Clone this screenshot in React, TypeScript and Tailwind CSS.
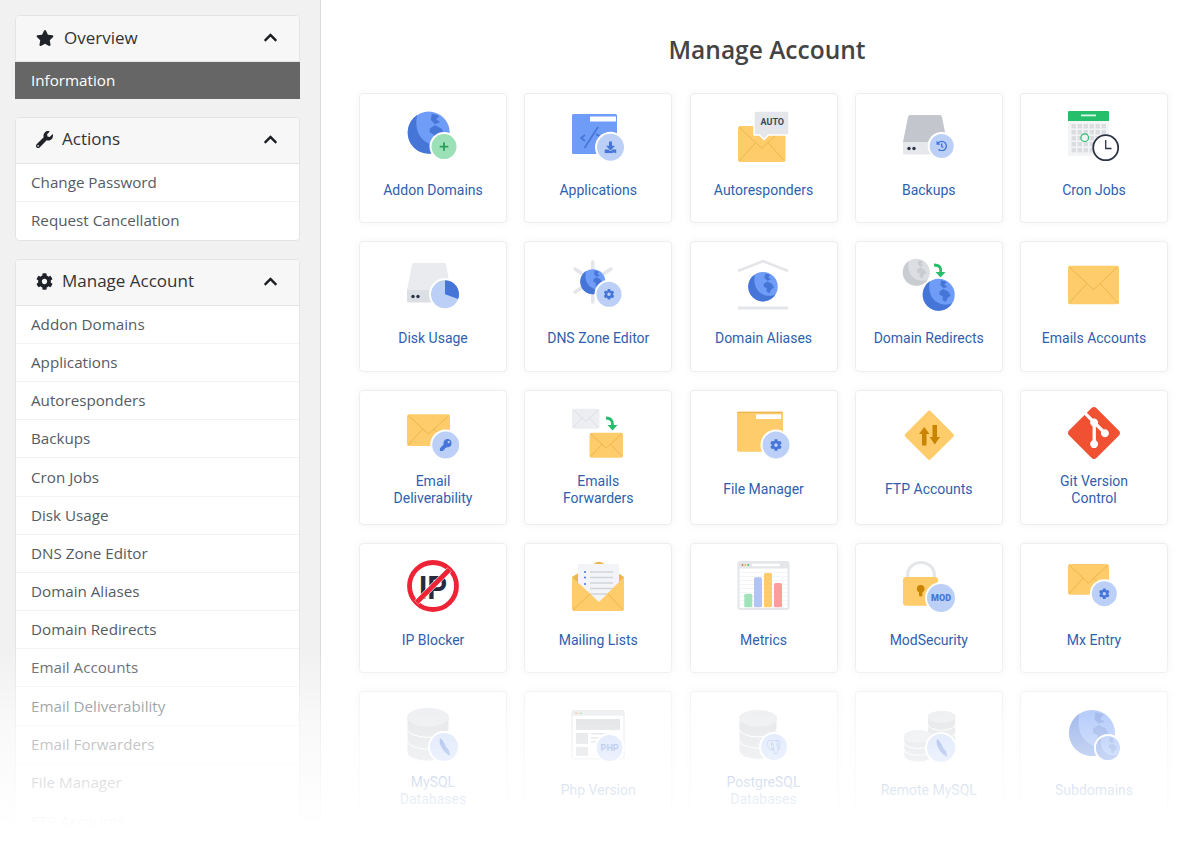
import React from 'react'
import { FaChevronUp, FaCog, FaDownload, FaHistory, FaKey, FaPlus, FaStar, FaWrench } from 'react-icons/fa'
import { SiGit, SiPostgresql } from 'react-icons/si'

const BLUE = '#6f9cf6'
const DARK = '#4675d8'
const BADGE = '#bcd0f7'
const YELLOW = '#ffcc6b'
const YELLOW_LINE = '#eeb54f'
const GREEN = '#25bf6c'

const Globe = ({ cx, cy, r, light = BLUE, dark = DARK }: { cx: number; cy: number; r: number; light?: string; dark?: string }) => (
    <g transform={`translate(${cx} ${cy}) scale(${r / 20})`}>
        <circle r={20} fill={light} />
        <path d="M-11 -16.700 A20 20 0 1 0 17 10.500 C4 17 -16 7 -11 -16.700Z" fill={dark} />
        <path d="M3 -18 L10 -16 L7 -12.500 L11 -10 L6 -8 L2 -12Z M1 -4 L6 -7 L12 -4 L15 1 L11 4 L9 9 L5 7 L5 2 L1 0Z" fill={dark} />
    </g>
)

const Envelope = ({ x, y, w, h, fill = YELLOW, line = YELLOW_LINE }: { x: number; y: number; w: number; h: number; fill?: string; line?: string }) => (
    <g>
        <rect x={x} y={y} width={w} height={h} rx={2.500} fill={fill} />
        <path
            d={`M${x + 1} ${y + 1} L${x + w / 2} ${y + h * 0.62} L${x + w - 1} ${y + 1} M${x + 1} ${y + h - 1} L${x + w * 0.37} ${y + h * 0.46} M${x + w - 1} ${y + h - 1} L${x + w * 0.63} ${y + h * 0.46}`}
            fill="none"
            stroke={line}
            strokeWidth={1}
        />
    </g>
)

const Badge = ({ cx, cy, r, children, fill = BADGE }: { cx: number; cy: number; r: number; children?: React.ReactNode; fill?: string }) => (
    <g>
        <circle cx={cx} cy={cy} r={r + 2} fill="#fff" />
        <circle cx={cx} cy={cy} r={r} fill={fill} />
        {children}
    </g>
)

const Hdd = ({ top, band }: { top: string; band: string }) => (
    <g>
        <path d="M7 5 H37 Q38.500 5 39 7 L44 32 V36 H0 V32 L5 7 Q5.500 5 7 5Z" fill={top} />
        <path d="M0 32 H44 V43 Q44 44.500 42.500 44.500 H1.500 Q0 44.500 0 43Z" fill={band} />
        <circle cx={6} cy={38.500} r={1.700} fill="#2c3345" />
        <circle cx={11} cy={38.500} r={1.700} fill="#2c3345" />
    </g>
)

const Db = ({ x, y, w, h }: { x: number; y: number; w: number; h: number }) => {
    const ry = w * 0.22
    const seg = (h - ry) / 3
    return (
        <g>
            {[2, 1, 0].map((i) => (
                <g key={i}>
                    <path
                        d={`M${x} ${y + ry + seg * i} V${y + ry + seg * (i + 1) - 1} A${w / 2} ${ry} 0 0 0 ${x + w} ${y + ry + seg * (i + 1) - 1} V${y + ry + seg * i}Z`}
                        fill="#cfd1d5"
                        stroke="#fff"
                        strokeWidth={1}
                    />
                </g>
            ))}
            <ellipse cx={x + w / 2} cy={y + ry} rx={w / 2} ry={ry} fill="#dfe1e5" />
        </g>
    )
}

const Dolphin = ({ cx, cy }: { cx: number; cy: number }) => (
    <path transform={`translate(${cx} ${cy})`} d="M-4 -9 C-1 -7 1 -3 2 0 C5 2 6 5 6 9 C3 7 -1 4 -2 1 C-4 -2 -5 -5 -4 -9Z" fill={DARK} />
)

const Icon = ({ children }: { children: React.ReactNode }) => (
    <svg viewBox="0 0 52 52" className="w-[52px] h-[52px] overflow-visible">
        {children}
    </svg>
)

const icons: Record<string, React.ReactNode> = {
    addon: (
        <Icon>
            <Globe cx={21.700} cy={22.600} r={21} />
            <Badge cx={37} cy={36.600} r={12.500} fill="#9ce0b8">
                <FaPlus x={32} y={31.600} size={10} color="#2f9e5f" />
            </Badge>
        </Icon>
    ),
    applications: (
        <Icon>
            <rect x={0} y={4} width={45} height={40} rx={1.500} fill={BLUE} />
            <rect x={18} y={6.500} width={26} height={5} fill="#fff" />
            <path d="M26 17 L12.500 38 M24 24 L29 27 L25 30 M13 25 L9 28 L13 31" fill="none" stroke={DARK} strokeWidth={1.600} />
            <Badge cx={38.500} cy={37.300} r={13.500}>
                <FaDownload x={32.500} y={31.300} size={12} color={DARK} />
            </Badge>
        </Icon>
    ),
    autoresponders: (
        <Icon>
            <Envelope x={0} y={16} w={47.500} h={36} />
            <path d="M16 1 H51 V25 H30.500 L26 29.500 L21.500 25 H16Z" fill="#e4e6ea" stroke="#fff" strokeWidth={1.500} />
            <text x={34.300} y={15} textAnchor="middle" fontFamily="Roboto, sans-serif" fontWeight={700} fontSize={9} fill="#3f4656">AUTO</text>
        </Icon>
    ),
    backups: (
        <Icon>
            <Hdd top="#c3c7cd" band="#e6e8ec" />
            <Badge cx={38.700} cy={36} r={12}>
                <FaHistory x={33.200} y={30.500} size={11} color={DARK} />
            </Badge>
        </Icon>
    ),
    cron: (
        <Icon>
            <rect x={0} y={1} width={41} height={45} rx={1} fill="#f3f4f6" />
            <path d="M1 1 H40 Q41 1 41 2 V11 H0 V2 Q0 1 1 1Z" fill={GREEN} />
            <rect x={13} y={4.500} width={15} height={1.800} fill="#d9f5e6" />
            {[0, 1, 2, 3, 4].map((r) =>
                [0, 1, 2, 3, 4, 5].map((c) => (
                    <rect key={`${r}-${c}`} x={3.500 + c * 6} y={14 + r * 6} width={4.500} height={4.500} fill="#dcdde0" />
                )),
            )}
            <circle cx={16.700} cy={27.700} r={3.800} fill="#f3f4f6" stroke={GREEN} strokeWidth={1.200} />
            <circle cx={37.700} cy={37.700} r={12.500} fill="#fff" stroke="#2c3345" strokeWidth={1.800} />
            <path d="M37.700 30 V38.500 H43.500" fill="none" stroke="#2c3345" strokeWidth={1.300} />
        </Icon>
    ),
    disk: (
        <Icon>
            <Hdd top="#e9ebef" band="#dcdfe4" />
            <circle cx={38} cy={36.300} r={16} fill="#fff" />
            <circle cx={38} cy={36.300} r={14} fill={BADGE} />
            <path d="M38 36.300 V22.300 A14 14 0 0 1 51.200 41Z" fill={DARK} />
        </Icon>
    ),
    dns: (
        <Icon>
            <g stroke="#e3e5e9" strokeWidth={3.500} strokeLinecap="round">
                <path d="M20.800 4 V44 M3 11 L39 35 M39 11 L3 34" />
            </g>
            <Globe cx={20.800} cy={23.700} r={12.500} />
            <Badge cx={37} cy={36.300} r={12.500}>
                <FaCog x={31.500} y={30.800} size={11} color={DARK} />
            </Badge>
        </Icon>
    ),
    aliases: (
        <Icon>
            <path d="M0 13 L25 3 L50 13" fill="none" stroke="#e3e5e9" strokeWidth={2.500} />
            <rect x={0} y={48.500} width={50} height={3} fill="#e3e5e9" />
            <Globe cx={25} cy={28.700} r={14.700} />
        </Icon>
    ),
    redirects: (
        <Icon>
            <Globe cx={13.300} cy={14.300} r={13.500} light="#dcdee2" dark="#c9ccd1" />
            <path d="M31 7 C37 7 38.500 10 37.500 15" fill="none" stroke={GREEN} strokeWidth={2.800} />
            <path d="M32.500 14 H42.500 L37.500 19.500Z" fill={GREEN} />
            <Globe cx={35.700} cy={36.700} r={16} />
        </Icon>
    ),
    emails: (
        <Icon>
            <Envelope x={0} y={7.700} w={51} h={38.600} />
        </Icon>
    ),
    deliverability: (
        <Icon>
            <Envelope x={0} y={7.300} w={43} h={31.700} />
            <Badge cx={38.700} cy={38} r={13.500}>
                <FaKey x={32.700} y={32} size={12} color={DARK} />
            </Badge>
        </Icon>
    ),
    forwarders: (
        <Icon>
            <Envelope x={0} y={1.700} w={27.500} h={20} fill="#eceef2" line="#dcdfe4" />
            <path d="M34 11 C39 11 41 14 40.500 19" fill="none" stroke={GREEN} strokeWidth={2.800} />
            <path d="M35.500 18 H45.500 L40.500 23.500Z" fill={GREEN} />
            <Envelope x={17.500} y={25.700} w={33.500} h={25} />
        </Icon>
    ),
    files: (
        <Icon>
            <path d="M1 4.700 H44 Q45 4.700 45 6 V44.700 H1 Q-1 44.700 -1 43 V6 Q-1 4.700 1 4.700Z" fill={YELLOW} />
            <path d="M-1 6 Q-1 4.700 1 4.700 H44 Q45 4.700 45 6Z" fill={YELLOW_LINE} />
            <rect x={18} y={7.300} width={25} height={4.700} fill="#fff" />
            <Badge cx={38} cy={38} r={13.500}>
                <FaCog x={32} y={32} size={12} color={DARK} />
            </Badge>
        </Icon>
    ),
    ftp: (
        <Icon>
            <rect x={8.300} y={10.300} width={36} height={36} rx={2} transform="rotate(45 26.300 28.300)" fill={YELLOW} />
            <path d="M21.300 20 L26.500 27 H23.500 V38.500 H19 V27 H16Z" fill="#c98400" />
            <path d="M29.500 18 H34 V30 H37 L31.800 37.500 L26.600 30 H29.500Z" fill="#c98400" />
        </Icon>
    ),
    git: <SiGit size={52} color="#f05133" />,
    ipblocker: (
        <Icon>
            <circle cx={26} cy={26} r={23.500} fill="#fff" stroke="#ee2436" strokeWidth={4.800} />
            <text x={26} y={39} textAnchor="middle" textLength={28} lengthAdjust="spacingAndGlyphs" fontFamily="'Liberation Sans', sans-serif" fontWeight={700} fontSize={34} fill="#252b3b">IP</text>
            <path d="M9.500 42.500 L42.500 9.500" stroke="#fff" strokeWidth={6} />
            <path d="M9.500 42.500 L42.500 9.500" stroke="#ee2436" strokeWidth={4.800} />
        </Icon>
    ),
    mailing: (
        <Icon>
            <path d="M0 17 L24 2.500 Q27 1 30 2.500 L52 17 V30 H0Z" fill={YELLOW_LINE} />
            <rect x={6} y={4} width={41} height={36} fill="#f2f4f7" />
            <path d="M6 38 H47 L27 44Z" fill="#f2f4f7" />
            {[12, 17.500, 24].map((y) => (
                <circle key={y} cx={13} cy={y} r={1} fill={DARK} />
            ))}
            {[12, 17.500, 23, 28.500, 34].map((y) => (
                <rect key={y} x={18} y={y - 0.700} width={23} height={1.400} fill="#cfd2d7" />
            ))}
            <path d="M0 17 L27 42 L52 17 V49 Q52 51 50 51 H2 Q0 51 0 49Z" fill={YELLOW} />
            <path d="M1 50 L18 34 M51 50 L36 34" stroke={YELLOW_LINE} strokeWidth={1} />
        </Icon>
    ),
    metrics: (
        <Icon>
            <rect x={0.500} y={2} width={50} height={47} rx={2} fill="#fff" stroke="#e4e6ea" strokeWidth={2} />
            <path d="M0 3.300 Q0 1.300 2 1.300 H49 Q51 1.300 51 3.300 V8.500 H0Z" fill="#e4e6ea" />
            <circle cx={4.500} cy={5} r={0.900} fill="#ee5a5a" />
            <circle cx={7.300} cy={5} r={0.900} fill="#f4b93f" />
            <circle cx={10.300} cy={5} r={0.900} fill="#37c172" />
            <rect x={14} y={3.800} width={28} height={2.400} rx={1} fill="#fff" />
            {[12, 16, 20, 24, 28, 32, 36, 40, 44].map((y) => (
                <rect key={y} x={2} y={y} width={47} height={0.600} fill="#eceef1" />
            ))}
            <rect x={6.300} y={33.700} width={8} height={13.600} rx={1.500} fill="#a0e2b9" />
            <rect x={16} y={17.300} width={8} height={30} rx={1.500} fill="#b0c5f3" />
            <rect x={26} y={13} width={8} height={34.300} rx={1.500} fill={YELLOW} />
            <rect x={36} y={23} width={8} height={24.300} rx={1.500} fill="#ff9d9d" />
        </Icon>
    ),
    modsecurity: (
        <Icon>
            <path d="M4.700 18 V14.500 A13.300 12 0 0 1 31.300 14.500 V18" fill="none" stroke="#e4e6ea" strokeWidth={3.200} />
            <rect x={0} y={17} width={35} height={28.700} rx={3} fill={YELLOW} />
            <circle cx={17.700} cy={28.700} r={3.800} fill="#c98400" />
            <rect x={16} y={29} width={3.400} height={7.500} rx={1.500} fill="#c98400" />
            <Badge cx={38} cy={38} r={14}>
                <text x={38} y={41.200} textAnchor="middle" fontFamily="Roboto, sans-serif" fontWeight={900} fontSize={9} fill={DARK}>MOD</text>
            </Badge>
        </Icon>
    ),
    mx: (
        <Icon>
            <Envelope x={0} y={4} w={41} h={30.700} />
            <Badge cx={36.300} cy={33.700} r={12.500}>
                <FaCog x={30.800} y={28.200} size={11} color={DARK} />
            </Badge>
        </Icon>
    ),
    mysql: (
        <Icon>
            <Db x={0} y={0} w={42} h={45} />
            <Badge cx={37} cy={39} r={14}>
                <Dolphin cx={37} cy={39} />
            </Badge>
        </Icon>
    ),
    php: (
        <Icon>
            <rect x={0} y={2.700} width={52} height={48} rx={2} fill="#fff" stroke="#dfe1e5" strokeWidth={1.500} />
            <rect x={0} y={2.700} width={52} height={5} fill="#dfe1e5" />
            <circle cx={4} cy={5.200} r={0.800} fill="#ee5a5a" />
            <circle cx={6.500} cy={5.200} r={0.800} fill="#f4b93f" />
            <circle cx={9} cy={5.200} r={0.800} fill="#37c172" />
            <rect x={4} y={11} width={44} height={11} fill="#c9cbd0" />
            <rect x={4} y={25} width={12} height={11} fill="#c9cbd0" />
            <rect x={4} y={39} width={12} height={9} fill="#c9cbd0" />
            <rect x={19} y={25} width={14} height={1.600} fill="#c9cbd0" />
            <rect x={19} y={29} width={10} height={1.600} fill="#c9cbd0" />
            <rect x={19} y={33} width={8} height={1.600} fill="#c9cbd0" />
            <Badge cx={37.600} cy={40} r={13}>
                <text x={37.600} y={43} textAnchor="middle" fontFamily="Roboto, sans-serif" fontWeight={700} fontSize={9} fill={DARK}>PHP</text>
            </Badge>
        </Icon>
    ),
    postgres: (
        <Icon>
            <Db x={1} y={2} w={38} h={42} />
            <Badge cx={36} cy={39} r={13}>
                <SiPostgresql x={29} y={32} size={14} color={DARK} />
            </Badge>
        </Icon>
    ),
    remote: (
        <Icon>
            <Db x={24.600} y={2.700} w={28} h={31} />
            <Db x={0.800} y={22} w={29} h={26.700} />
            <Badge cx={38} cy={40} r={14}>
                <Dolphin cx={38} cy={40} />
            </Badge>
        </Icon>
    ),
    subdomains: (
        <Icon>
            <Globe cx={24} cy={25} r={23} />
            <circle cx={40} cy={40} r={14} fill="#fff" />
            <Globe cx={40} cy={40} r={12} />
        </Icon>
    ),
}

const cards: { label: string; icon: string }[] = [
    { label: 'Addon Domains', icon: 'addon' },
    { label: 'Applications', icon: 'applications' },
    { label: 'Autoresponders', icon: 'autoresponders' },
    { label: 'Backups', icon: 'backups' },
    { label: 'Cron Jobs', icon: 'cron' },
    { label: 'Disk Usage', icon: 'disk' },
    { label: 'DNS Zone Editor', icon: 'dns' },
    { label: 'Domain Aliases', icon: 'aliases' },
    { label: 'Domain Redirects', icon: 'redirects' },
    { label: 'Emails Accounts', icon: 'emails' },
    { label: 'Email\nDeliverability', icon: 'deliverability' },
    { label: 'Emails\nForwarders', icon: 'forwarders' },
    { label: 'File Manager', icon: 'files' },
    { label: 'FTP Accounts', icon: 'ftp' },
    { label: 'Git Version\nControl', icon: 'git' },
    { label: 'IP Blocker', icon: 'ipblocker' },
    { label: 'Mailing Lists', icon: 'mailing' },
    { label: 'Metrics', icon: 'metrics' },
    { label: 'ModSecurity', icon: 'modsecurity' },
    { label: 'Mx Entry', icon: 'mx' },
    { label: 'MySQL\nDatabases', icon: 'mysql' },
    { label: 'Php Version', icon: 'php' },
    { label: 'PostgreSQL\nDatabases', icon: 'postgres' },
    { label: 'Remote MySQL', icon: 'remote' },
    { label: 'Subdomains', icon: 'subdomains' },
]

const manageItems = [
    'Addon Domains',
    'Applications',
    'Autoresponders',
    'Backups',
    'Cron Jobs',
    'Disk Usage',
    'DNS Zone Editor',
    'Domain Aliases',
    'Domain Redirects',
    'Email Accounts',
    'Email Deliverability',
    'Email Forwarders',
    'File Manager',
    'FTP Accounts',
]

const Panel = ({ icon, title, gap, children }: { icon: React.ReactNode; title: string; gap: string; children: React.ReactNode }) => (
    <section className="border border-[#e2e4e7] rounded-[4px] bg-white">
        <header className="h-[46px] flex items-center justify-between pl-[20px] pr-[21px] pb-[2px] bg-[#f7f7f7] rounded-t-[3px] border-b border-[#e2e4e7]">
            <div className={`flex items-center ${gap}`}>
                {icon}
                <h3 className="text-[17px] text-[#333]">{title}</h3>
            </div>
            <FaChevronUp size={15} color="#1a1d21" />
        </header>
        {children}
    </section>
)

const PanelItem = ({ label }: { label: string }) => (
    <div className="h-[38.200px] flex items-center pl-[15px] text-[15.200px] text-[#555b63] border-b border-[#f3f3f3] last:border-b-0">
        {label}
    </div>
)

export default function App() {
    return (
        <div className="relative w-[1200px] h-[860px] overflow-hidden flex bg-white font-['Open_Sans',sans-serif]">
            {/* Sidebar */}
            <aside className="w-[321px] shrink-0 flex flex-col gap-[17.600px] pl-[15px] pt-[15px] pr-[20px] bg-[#f1f1f1] border-r border-[#dcdcdc]">
                <Panel icon={<FaStar size={18} color="#1f2329" />} title="Overview" gap="gap-[10px]">
                    <div className="h-[37px] -mx-px -mb-px flex items-center pl-[16px] text-[15.200px] font-medium text-white bg-[#666]">Information</div>
                </Panel>
                <Panel icon={<FaWrench size={17} color="#1f2329" />} title="Actions" gap="gap-[9px]">
                    <PanelItem label="Change Password" />
                    <PanelItem label="Request Cancellation" />
                </Panel>
                <Panel icon={<FaCog size={17} color="#1f2329" />} title="Manage Account" gap="gap-[9px]">
                    {manageItems.map((item) => (
                        <PanelItem key={item} label={item} />
                    ))}
                </Panel>
            </aside>

            {/* Main */}
            <main className="flex-1 min-w-0 pl-[38px] pr-[32px]">
                <h2 className="h-[93px] pt-[32px] pl-[7px] text-center text-[24.500px] leading-[36px] font-semibold text-[#444]">Manage Account</h2>
                <div className="grid grid-cols-5 gap-x-[17.250px] gap-y-[18px] grid-rows-[130px_131px_135px_130px_135px]">
                    {cards.map((card) => (
                        <a key={card.label} className="flex flex-col items-center bg-white border border-[#eceef1] rounded-[4px] shadow-[0_0_8px_rgba(0,0,0,0.05)]">
                            <div className="h-[52px] mt-[16px] w-[52px] shrink-0">{icons[card.icon]}</div>
                            <div className="flex-1 flex items-center justify-center pb-[4px] text-center whitespace-pre-line text-[14px] leading-[17px] text-[#2f5fae] font-['Roboto',sans-serif]">
                                {card.label}
                            </div>
                        </a>
                    ))}
                </div>
            </main>

            {/* Fade */}
            <div className="absolute left-0 right-0 top-[650px] bottom-0 pointer-events-none bg-[linear-gradient(to_bottom,rgba(255,255,255,0)_0%,rgba(255,255,255,0.5)_30%,rgba(255,255,255,0.88)_70%,#fff_85%)]"></div>
        </div>
    )
}
